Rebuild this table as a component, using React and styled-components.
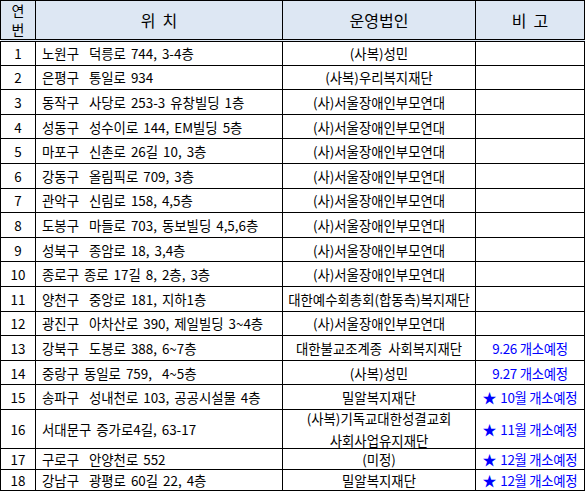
import styled, { createGlobalStyle } from 'styled-components';

const GlobalStyle = createGlobalStyle`
  html, body {
    margin: 0;
    padding: 0;
    background: #ffffff;
  }
  body {
    font-family: "Noto Sans CJK KR", "Noto Sans", sans-serif;
    color: #000000;
  }
`;

const rows = [
  { no: 1, place: '노원구  덕릉로 744, 3-4층', org: '(사복)성민' },
  { no: 2, place: '은평구  통일로 934', org: '(사복)우리복지재단' },
  { no: 3, place: '동작구  사당로 253-3 유창빌딩 1층', org: '(사)서울장애인부모연대' },
  { no: 4, place: '성동구  성수이로 144, EM빌딩 5층', org: '(사)서울장애인부모연대' },
  { no: 5, place: '마포구  신촌로 26길 10, 3층', org: '(사)서울장애인부모연대' },
  { no: 6, place: '강동구  올림픽로 709, 3층', org: '(사)서울장애인부모연대' },
  { no: 7, place: '관악구  신림로 158, 4,5층', org: '(사)서울장애인부모연대' },
  { no: 8, place: '도봉구  마들로 703, 동보빌딩 4,5,6층', org: '(사)서울장애인부모연대' },
  { no: 9, place: '성북구  종암로 18, 3,4층', org: '(사)서울장애인부모연대' },
  { no: 10, place: '종로구 종로 17길 8, 2층, 3층', org: '(사)서울장애인부모연대' },
  { no: 11, place: '양천구  중앙로 181, 지하1층', org: '대한예수회총회(합동측)복지재단' },
  { no: 12, place: '광진구  아차산로 390, 제일빌딩 3~4층', org: '(사)서울장애인부모연대' },
  { no: 13, place: '강북구  도봉로 388, 6~7층', org: '대한불교조계종  사회복지재단', note: '9.26 개소예정' },
  { no: 14, place: '중랑구 동일로 759,  4~5층', org: '(사복)성민', note: '9.27 개소예정' },
  { no: 15, place: '송파구  성내천로 103, 공공시설물 4층', org: '밀알복지재단', note: '10월 개소예정', star: true },
  { no: 16, place: '서대문구 증가로4길, 63-17', org: ['(사복)기독교대한성결교회', '사회사업유지재단'], note: '11월 개소예정', star: true, height: 39.3 },
  { no: 17, place: '구로구  안양천로 552', org: '(미정)', note: '12월 개소예정', star: true, height: 20.7 },
  { no: 18, place: '강남구  광평로 60길 22, 4층', org: '밀알복지재단', note: '12월 개소예정', star: true, height: 21 },
];

export default function App() {
  return (
    <Page>
      <GlobalStyle />
      <Table>
        <colgroup>
          <col style={{ width: 35 }} />
          <col style={{ width: 247 }} />
          <col style={{ width: 193 }} />
          <col style={{ width: 109 }} />
        </colgroup>
        <thead>
          <HeadRow>
            <HeadCell $small>
              <StackLine>연</StackLine>
              <StackLine>번</StackLine>
            </HeadCell>
            <HeadCell>위&nbsp;&nbsp;치</HeadCell>
            <HeadCell>운영법인</HeadCell>
            <HeadCell>비&nbsp;&nbsp;고</HeadCell>
          </HeadRow>
        </thead>
        <tbody>
          {rows.map((r) => (
            <Row key={r.no} $height={r.height || 24.6}>
              <NoCell>{r.no}</NoCell>
              <PlaceCell>{r.place}</PlaceCell>
              <OrgCell>
                {Array.isArray(r.org)
                  ? r.org.map((line) => <OrgLine key={line}>{line}</OrgLine>)
                  : r.org}
              </OrgCell>
              <NoteCell>
                {r.star && <Star>★</Star>}
                {r.note}
              </NoteCell>
            </Row>
          ))}
        </tbody>
      </Table>
    </Page>
  );
}

const Page = styled.div`
  width: 586px;
  height: 495px;
  overflow: hidden;
`;

const Table = styled.table`
  width: 585px;
  table-layout: fixed;
  border-collapse: collapse;
  border: 1px solid #000;
`;

const HeadRow = styled.tr`
  height: 40px;
  background: #dde7f3;
`;

const HeadCell = styled.th`
  border: 1px solid #000;
  border-bottom: 3px double #000;
  padding: 0;
  font-weight: 400;
  font-size: ${(p) => (p.$small ? '14px' : '16px')};
  line-height: 20px;
  text-align: center;
  vertical-align: middle;
`;

const StackLine = styled.div`
  line-height: 19px;
  height: 19px;
`;

const Row = styled.tr`
  height: ${(p) => p.$height}px;
`;

const Cell = styled.td`
  border: 1px solid #000;
  padding: 0;
  font-size: 13.4px;
  line-height: 16px;
  vertical-align: middle;
  white-space: pre;
  overflow: hidden;
`;

const NoCell = styled(Cell)`
  text-align: center;
`;

const PlaceCell = styled(Cell)`
  text-align: left;
  padding-left: 6px;
  word-spacing: 2px;
`;

const OrgCell = styled(Cell)`
  text-align: center;
`;

const OrgLine = styled.div`
  line-height: 16px;

  & + & {
    margin-top: 6px;
  }
`;

const NoteCell = styled(Cell)`
  text-align: center;
  color: #0000ff;
  letter-spacing: -0.3px;
`;

const Star = styled.span`
  margin-right: 4px;
  font-size: 14px;
`;
